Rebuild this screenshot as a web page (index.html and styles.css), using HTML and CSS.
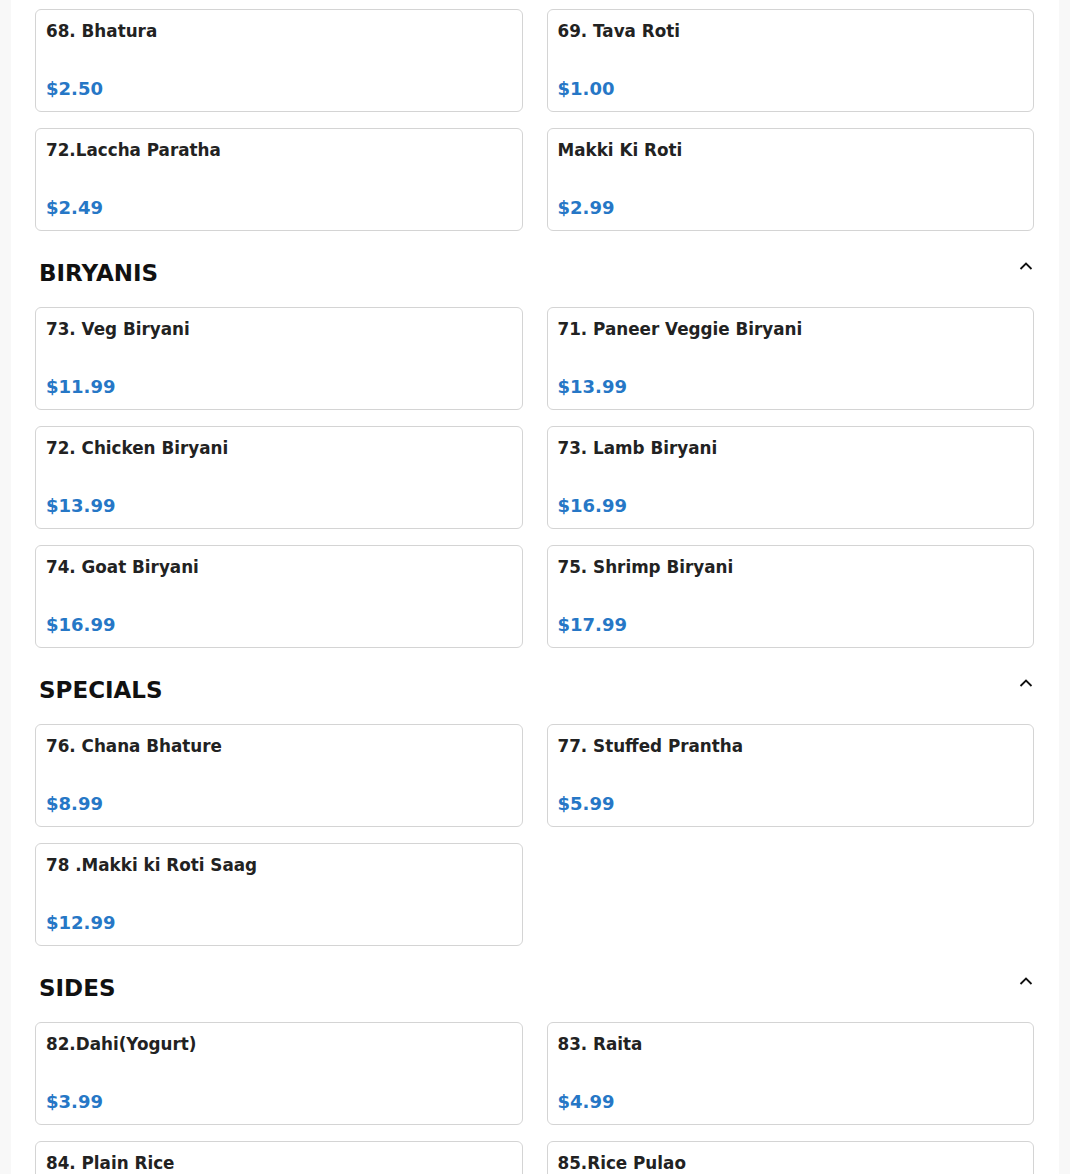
FILE: index.html
```html
<!DOCTYPE html>
<html>
<head>
<meta charset="utf-8">
<link rel="stylesheet" href="styles.css">
</head>
<body>
<div class="page">
  <div class="grid">
    <div class="card"><div class="name">68. Bhatura</div><div class="price">$2.50</div></div>
    <div class="card"><div class="name">69. Tava Roti</div><div class="price">$1.00</div></div>
    <div class="card"><div class="name">72.Laccha Paratha</div><div class="price">$2.49</div></div>
    <div class="card"><div class="name">Makki Ki Roti</div><div class="price">$2.99</div></div>
  </div>

  <div class="section-head"><h2>BIRYANIS</h2><svg class="chev" width="16" height="12" viewBox="0 0 16 12"><path d="M2.5 9 L8 3.5 L13.5 9" fill="none" stroke="#111" stroke-width="1.8"/></svg></div>
  <div class="grid">
    <div class="card"><div class="name">73. Veg Biryani</div><div class="price">$11.99</div></div>
    <div class="card"><div class="name">71. Paneer Veggie Biryani</div><div class="price">$13.99</div></div>
    <div class="card"><div class="name">72. Chicken Biryani</div><div class="price">$13.99</div></div>
    <div class="card"><div class="name">73. Lamb Biryani</div><div class="price">$16.99</div></div>
    <div class="card"><div class="name">74. Goat Biryani</div><div class="price">$16.99</div></div>
    <div class="card"><div class="name">75. Shrimp Biryani</div><div class="price">$17.99</div></div>
  </div>

  <div class="section-head"><h2>SPECIALS</h2><svg class="chev" width="16" height="12" viewBox="0 0 16 12"><path d="M2.5 9 L8 3.5 L13.5 9" fill="none" stroke="#111" stroke-width="1.8"/></svg></div>
  <div class="grid">
    <div class="card"><div class="name">76. Chana Bhature</div><div class="price">$8.99</div></div>
    <div class="card"><div class="name">77. Stuffed Prantha</div><div class="price">$5.99</div></div>
    <div class="card"><div class="name">78 .Makki ki Roti Saag</div><div class="price">$12.99</div></div>
  </div>

  <div class="section-head"><h2>SIDES</h2><svg class="chev" width="16" height="12" viewBox="0 0 16 12"><path d="M2.5 9 L8 3.5 L13.5 9" fill="none" stroke="#111" stroke-width="1.8"/></svg></div>
  <div class="grid">
    <div class="card"><div class="name">82.Dahi(Yogurt)</div><div class="price">$3.99</div></div>
    <div class="card"><div class="name">83. Raita</div><div class="price">$4.99</div></div>
    <div class="card"><div class="name">84. Plain Rice</div><div class="price">$2.99</div></div>
    <div class="card"><div class="name">85.Rice Pulao</div><div class="price">$4.99</div></div>
  </div>
</div>
</body>
</html>
```

FILE: styles.css
```css
html, body {
  margin: 0;
  padding: 0;
  background: #f8f8f8;
  font-family: "DejaVu Sans", sans-serif;
  color: #222;
}
.page {
  width: 1048px;
  margin-left: 11px;
  background: #fff;
  box-sizing: border-box;
  padding: 9px 25px 40px 24px;
}
.grid {
  display: grid;
  grid-template-columns: 1fr 1fr;
  column-gap: 24px;
  row-gap: 16px;
}
.card {
  border: 1px solid #d4d4d4;
  border-radius: 6px;
  padding: 10px 10px 11px 10px;
  height: 103px;
  box-sizing: border-box;
  display: flex;
  flex-direction: column;
  justify-content: space-between;
}
.name {
  font-size: 16.8px;
  font-weight: bold;
  line-height: 22px;
  color: #222;
}
.price {
  font-size: 18px;
  font-weight: bold;
  line-height: 22px;
  color: #2677c6;
}
.section-head {
  display: flex;
  justify-content: space-between;
  align-items: flex-start;
  margin: 28px 0 20px 0;
  padding: 0 0 0 4px;
}
.section-head h2 {
  margin: 0;
  font-size: 23px;
  line-height: 28px;
  font-weight: bold;
  color: #111;
}
.chev {
  margin-top: 1px;
}
```
